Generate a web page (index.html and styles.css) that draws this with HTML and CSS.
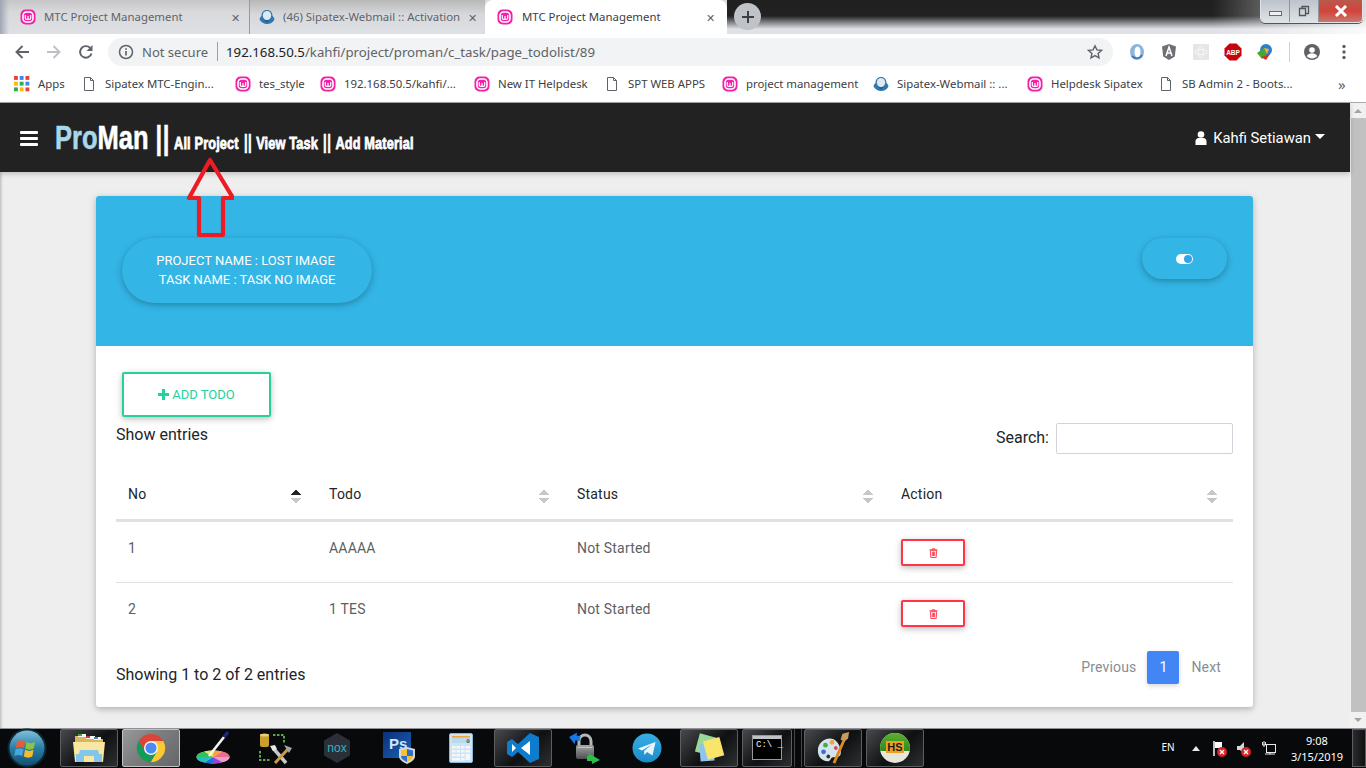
FILE: index.html
```html
<!DOCTYPE html>
<html lang="en">
<head>
<meta charset="utf-8">
<title>MTC Project Management</title>
<link rel="stylesheet" href="styles.css">
</head>
<body>
<svg class="defs" width="0" height="0" aria-hidden="true">
  <defs>
    <symbol id="wamp" viewBox="0 0 16 16">
      <rect x="0.5" y="0.5" width="15" height="15" rx="5" fill="#f61fa8"/>
      <rect x="3" y="3" width="10" height="10" rx="3.5" fill="none" stroke="#fff" stroke-width="1.6"/>
      <path d="M5.3 6v3.2q0 1.2 1.3 1.2T8 9.2V7v2.2q0 1.2 1.3 1.2t1.4-1.2V6" fill="none" stroke="#fff" stroke-width="1.2"/>
    </symbol>
    <symbol id="doc" viewBox="0 0 16 16">
      <path d="M3.5 1.5h6l3 3v10h-9z M9.5 1.5v3h3" fill="#fff" stroke="#5f6368" stroke-width="1"/>
    </symbol>
    <symbol id="mail" viewBox="0 0 16 16">
      <path d="M8 1C4.5 1 2.5 3.5 2.5 7c-1 .8-1.8 2-2 3.5C2 13 5 15 8 15c3 0 6-1.500 7.500-4.500-.2-1.500-1-2.700-2-3.500C13.500 3.500 11.500 1 8 1z" fill="#2f78b0"/>
      <ellipse cx="8" cy="6.500" rx="4.200" ry="4.500" fill="#dfe8ee"/>
      <path d="M3.500 9.500C5 12 11 12 12.500 9.500L8 13.500z" fill="#1d5a8c"/>
    </symbol>
    <linearGradient id="g-orb" x1="0" y1="0" x2="0" y2="1">
      <stop offset="0" stop-color="#7fc0d8"/><stop offset=".5" stop-color="#2a7ea6"/><stop offset="1" stop-color="#124f74"/>
    </linearGradient>
    <linearGradient id="g-ps" x1="0" y1="0" x2="1" y2="1">
      <stop offset="0" stop-color="#0c2f78"/><stop offset="1" stop-color="#1a62b8"/>
    </linearGradient>
    <linearGradient id="g-lock" x1="0" y1="0" x2="0" y2="1">
      <stop offset="0" stop-color="#a4a6a8"/><stop offset="1" stop-color="#4c4e50"/>
    </linearGradient>
    <linearGradient id="g-tg" x1="0" y1="0" x2="0" y2="1">
      <stop offset="0" stop-color="#38aee4"/><stop offset="1" stop-color="#1a8ccb"/>
    </linearGradient>
  </defs>
</svg>

<div class="tabstrip">
  <div class="tab tab-first">
    <svg class="fav"><use href="#wamp"/></svg>
    <span class="tab-title">MTC Project Management</span>
    <span class="tab-x">✕</span>
  </div>
  <div class="tab tab-second">
    <svg class="fav"><use href="#mail"/></svg>
    <span class="tab-title">(46) Sipatex-Webmail :: Activation</span>
    <span class="tab-x">✕</span>
  </div>
  <div class="tab tab-active">
    <svg class="fav"><use href="#wamp"/></svg>
    <span class="tab-title">MTC Project Management</span>
    <span class="tab-x">✕</span>
  </div>
  <div class="strip-rest">
    <span class="new-tab">
      <svg viewBox="0 0 14 14" width="14" height="14"><path d="M7 1v12M1 7h12" stroke="#3c4043" stroke-width="2"/></svg>
    </span>
    <div class="winctl">
      <span class="wc wc-min"><i></i></span>
      <span class="wc wc-max"><svg viewBox="0 0 12 12" width="12" height="12"><path d="M1.500 3.500h6v7h-6z M4 3.500V1.500h6.500v7H7.500" fill="none" stroke="#50565c" stroke-width="1.300"/></svg></span>
      <span class="wc wc-close"><svg viewBox="0 0 14 12" width="14" height="12"><path d="M2 1l10 10M12 1L2 11" stroke="#fff" stroke-width="3"/></svg></span>
    </div>
  </div>
</div>

<div class="toolbar">
  <div class="nav-btns">
    <svg viewBox="0 0 16 16" width="16" height="16"><path d="M15 8H2.500M8.500 2l-6 6 6 6" fill="none" stroke="#5f6368" stroke-width="1.900"/></svg>
    <svg viewBox="0 0 16 16" width="16" height="16"><path d="M1 8h12.500M7.500 2l6 6-6 6" fill="none" stroke="#bdc1c6" stroke-width="1.900"/></svg>
    <svg viewBox="0 0 16 16" width="16" height="16"><path d="M13.500 9.500A5.800 5.800 0 1 1 12 3.800" fill="none" stroke="#5f6368" stroke-width="1.900"/><path d="M14.500 1v6h-6z" fill="#5f6368"/></svg>
  </div>
  <div class="omnibox">
    <svg class="info" viewBox="0 0 16 16" width="16" height="16"><circle cx="8" cy="8" r="6.500" fill="none" stroke="#5f6368" stroke-width="1.500"/><path d="M8 7v4.500M8 4.200v1.600" stroke="#5f6368" stroke-width="1.700"/></svg>
    <span class="not-secure">Not secure</span>
    <span class="omni-sep"></span>
    <span class="url"><b>192.168.50.5</b>/kahfi/project/proman/c_task/page_todolist/89</span>
    <svg class="star" viewBox="0 0 16 16" width="16" height="16"><path d="M8 1.800l1.900 4.100 4.500.5-3.300 3 .9 4.400L8 11.600l-4 2.200.9-4.400-3.300-3 4.500-.5z" fill="none" stroke="#5f6368" stroke-width="1.400"/></svg>
  </div>
  <div class="ext">
    <svg viewBox="0 0 16 18" width="16" height="18"><ellipse cx="8" cy="9" rx="7" ry="8" fill="#8fb4dc"/><ellipse cx="8.500" cy="9" rx="3" ry="5.500" fill="#fff"/><path d="M3 13C5 16 11 16 13 12" stroke="#2e6fb5" stroke-width="1.500" fill="none"/></svg>
    <svg viewBox="0 0 16 18" width="16" height="18"><path d="M8 1l7 2.500-1.200 10L8 17l-5.800-3.500L1 3.500z" fill="#6d7074"/><path d="M5 13l3-9 3 9M6 10h4" stroke="#fff" stroke-width="1.500" fill="none"/></svg>
    <svg viewBox="0 0 16 16" width="16" height="16"><rect width="16" height="16" fill="#e6e6e6"/><ellipse cx="8" cy="8" rx="6" ry="2.500" fill="none" stroke="#f6f6f6"/><ellipse cx="8" cy="8" rx="2.500" ry="6" fill="none" stroke="#f6f6f6"/></svg>
    <svg class="wide" viewBox="0 0 18 18" width="18" height="18"><path d="M5.500 0.500h7l5 5v7l-5 5h-7l-5-5v-7z" fill="#c8050f"/><text x="9" y="12" class="abp">ABP</text></svg>
    <svg class="wide" viewBox="0 0 18 18" width="18" height="18"><circle cx="10" cy="7" r="6" fill="#2c7fd0"/><path d="M1 10l7-5 3 5-5 6z" fill="#47a82f"/><path d="M8 5l5 1-2 5z" fill="#f7b32b"/><path d="M5 14l9-3-4 6z" fill="#d2322d"/></svg>
    <span class="ext-sep"></span>
    <svg viewBox="0 0 18 18" width="18" height="18"><circle cx="9" cy="9" r="8" fill="#5f6368"/><circle cx="9" cy="7" r="2.800" fill="#fff"/><path d="M3.800 13c1.200-2 3-2.800 5.200-2.800s4 .8 5.200 2.800c-1.200 1.600-3 2.500-5.200 2.500S5 14.600 3.800 13z" fill="#fff"/></svg>
    <svg class="dots" viewBox="0 0 4 16" width="4" height="16"><circle cx="2" cy="2.500" r="1.700" fill="#5f6368"/><circle cx="2" cy="8" r="1.700" fill="#5f6368"/><circle cx="2" cy="13.500" r="1.700" fill="#5f6368"/></svg>
  </div>
</div>

<div class="bookmarks">
  <div class="bm">
    <svg class="fav" viewBox="0 0 14 14"><g><rect x="0" y="0" width="3.400" height="3.400" fill="#ea4335"/><rect x="5" y="0" width="3.400" height="3.400" fill="#4285f4"/><rect x="10" y="0" width="3.400" height="3.400" fill="#ea4335"/><rect x="0" y="5" width="3.400" height="3.400" fill="#fbbc05"/><rect x="5" y="5" width="3.400" height="3.400" fill="#34a853"/><rect x="10" y="5" width="3.400" height="3.400" fill="#4285f4"/><rect x="0" y="10" width="3.400" height="3.400" fill="#34a853"/><rect x="5" y="10" width="3.400" height="3.400" fill="#fbbc05"/><rect x="10" y="10" width="3.400" height="3.400" fill="#ea4335"/></g></svg>
    <span>Apps</span>
  </div>
  <div class="bm bm-shift"><svg class="fav"><use href="#doc"/></svg><span>Sipatex MTC-Engin...</span></div>
  <div class="bm"><svg class="fav"><use href="#wamp"/></svg><span>tes_style</span></div>
  <div class="bm"><svg class="fav"><use href="#wamp"/></svg><span>192.168.50.5/kahfi/...</span></div>
  <div class="bm"><svg class="fav"><use href="#wamp"/></svg><span>New IT Helpdesk</span></div>
  <div class="bm"><svg class="fav"><use href="#doc"/></svg><span>SPT WEB APPS</span></div>
  <div class="bm"><svg class="fav"><use href="#wamp"/></svg><span>project management</span></div>
  <div class="bm"><svg class="fav"><use href="#mail"/></svg><span>Sipatex-Webmail :: ...</span></div>
  <div class="bm"><svg class="fav"><use href="#wamp"/></svg><span>Helpdesk Sipatex</span></div>
  <div class="bm"><svg class="fav"><use href="#doc"/></svg><span>SB Admin 2 - Boots...</span></div>
  <div class="bm-more">»</div>
</div>

<div class="viewport">
  <div class="page">
    <nav class="navbar">
      <span class="burger"><i></i><i></i><i></i></span>
      <div class="brand">
        <span class="pro">Pro</span><span class="man">Man</span>
        <span class="bars bars-big">||</span>
        <a class="nav-link">All Project</a>
        <span class="bars">||</span>
        <a class="nav-link">View Task</a>
        <span class="bars">||</span>
        <a class="nav-link">Add Material</a>
      </div>
      <div class="user">
        <svg viewBox="0 0 12 14" width="12" height="14"><circle cx="6" cy="3.500" r="3.300" fill="#fff"/><path d="M0.500 14v-3.500C.5 8.500 2 7 3.500 7h5c1.500 0 3 1.500 3 3.500V14z" fill="#fff"/></svg>
        <span>Kahfi Setiawan</span>
        <i class="caret"></i>
      </div>
    </nav>

    <main class="content">
      <section class="card">
        <header class="card-head">
          <div class="pill pill-title">
            <div>PROJECT NAME : LOST IMAGE</div>
            <div>&nbsp;TASK NAME : TASK NO IMAGE</div>
          </div>
          <div class="pill pill-toggle">
            <span class="toggle"><i></i></span>
          </div>
        </header>
        <div class="card-body">
          <button class="btn-add" type="button"><span class="plus"></span>ADD TODO</button>
          <div class="dt-top">
            <div class="dt-length">Show entries</div>
            <label class="dt-search">Search:<input type="text"></label>
          </div>
          <table class="dt">
            <thead>
              <tr>
                <th class="c-no">No<span class="sort sort-asc"></span></th>
                <th class="c-todo">Todo<span class="sort"></span></th>
                <th class="c-status">Status<span class="sort"></span></th>
                <th class="c-action">Action<span class="sort"></span></th>
              </tr>
            </thead>
            <tbody>
              <tr>
                <td>1</td><td>AAAAA</td><td>Not Started</td>
                <td><button class="btn-del" type="button"><svg viewBox="0 0 10 11" width="9" height="10"><path d="M0.500 2h9M3.500 2V.8h3V2M1.500 2.500l.5 8h6l.5-8zM3.700 4v5M5 4v5M6.300 4v5" fill="none" stroke="#ff3547" stroke-width="1"/></svg></button></td>
              </tr>
              <tr>
                <td>2</td><td>1 TES</td><td>Not Started</td>
                <td><button class="btn-del" type="button"><svg viewBox="0 0 10 11" width="9" height="10"><path d="M0.500 2h9M3.500 2V.8h3V2M1.500 2.500l.5 8h6l.5-8zM3.700 4v5M5 4v5M6.300 4v5" fill="none" stroke="#ff3547" stroke-width="1"/></svg></button></td>
              </tr>
            </tbody>
          </table>
          <div class="dt-bottom">
            <div class="dt-info">Showing 1 to 2 of 2 entries</div>
            <div class="pager">
              <span class="pg">Previous</span>
              <span class="pg pg-on">1</span>
              <span class="pg">Next</span>
            </div>
          </div>
        </div>
      </section>
    </main>

    <svg class="red-arrow" viewBox="0 0 48 82" width="48" height="82"><path d="M24 3L3 41h10v37h24V41h10z" fill="none" stroke="#ed1c24" stroke-width="4.200" stroke-linejoin="round"/></svg>
  </div>
  <div class="scrollbar">
    <span class="sb-up"></span>
    <span class="sb-thumb"></span>
    <span class="sb-down"></span>
  </div>
</div>

<footer class="taskbar">
  <div class="start">
    <svg viewBox="0 0 40 40" width="40" height="40">
      <circle cx="20" cy="20" r="19.500" fill="#0c2735"/>
      <circle cx="20" cy="20" r="17.500" fill="url(#g-orb)"/>
      <path d="M10 13.500c2.500-1.500 5-1.500 8 0l-1.200 6.500c-2.800-1.200-5.300-1.200-8 0z" fill="#ea5a35"/>
      <path d="M19.500 14c3 1.500 5.500 1.500 8.500 0l-1.200 6.500c-3 1.500-5.500 1.500-8.500 0z" fill="#8ac441"/>
      <path d="M8.500 21.300c2.600-1.200 5.200-1.200 8 0L15.300 28c-2.700-1.300-5.200-1.300-8 0z" fill="#4aa6dc"/>
      <path d="M18 21.800c3 1.500 5.500 1.500 8.500 0L25.300 28.500c-3 1.500-5.500 1.500-8.500 0z" fill="#f7bc2e"/>
    </svg>
  </div>
  <div class="tb-app tb-open">
    <svg viewBox="0 0 32 30" width="32" height="30"><path d="M2 3h11l2 3h15v22H2z" fill="#d9b75c"/><rect x="5" y="1" width="8" height="3" fill="#f5f5f0"/><rect x="5" y="1" width="4" height="2" fill="#3ea63a"/><rect x="13" y="3" width="9" height="3" fill="#f5f5f0"/><rect x="13" y="3" width="4" height="2" fill="#d33a2c"/><rect x="21" y="4" width="7" height="3" fill="#f5f5f0"/><rect x="21" y="4" width="4" height="2" fill="#3a86d3"/><path d="M0 9h32l-2 20H2z" fill="#f8e6a2"/><path d="M7 17h18l1 4h3v8H3v-8h3z" fill="#82c6ea"/><rect x="11" y="23" width="10" height="6" fill="#f8e6a2"/></svg>
  </div>
  <div class="tb-app tb-open tb-active">
    <svg viewBox="0 0 32 32" width="30" height="30"><path d="M3 8.500L9.500 19.750 16 16V8.500H29A15 15 0 0 0 3 8.500z" fill="#db4437"/><path d="M3 8.500L9.500 19.750 16 31A15 15 0 0 1 3 8.500z" fill="#0f9d58"/><path d="M29 8.500H16V16L22.500 19.750 16 31A15 15 0 0 0 29 8.500z" fill="#fcc934"/><path d="M9.500 19.750L16 31 22.500 19.750 16 16z" fill="#0f9d58"/><path d="M22.500 19.750L16 31A15 15 0 0 0 24 28.500z" fill="#fcc934"/><circle cx="16" cy="16" r="7.500" fill="#f4f4f4"/><circle cx="16" cy="16" r="5.900" fill="#4a8af4"/></svg>
  </div>
  <div class="tb-app">
    <svg viewBox="0 0 36 36" width="36" height="36"><ellipse cx="18" cy="27" rx="16.500" ry="6.500" fill="#e8e8e8"/><path d="M18 27H1.500a16.500 6.500 0 0 1 8-5.600z" fill="#30c060"/><path d="M18 27L9.500 21.400a16.500 6.500 0 0 1 9-.9z" fill="#f6e23a"/><path d="M18 27l.5-6.500a16.500 6.500 0 0 1 9 1z" fill="#f4a63a"/><path d="M18 27l9.500-5.500a16.500 6.500 0 0 1 7 5.500z" fill="#f06a8a"/><path d="M18 27h16.500a16.500 6.500 0 0 1-7 5.300z" fill="#e8a0c8"/><path d="M18 27l9.500 5.300a16.500 6.500 0 0 1-9.500 1.200z" fill="#a040d0"/><path d="M18 27v6.500a16.500 6.500 0 0 1-9-1z" fill="#2070e0"/><path d="M18 27L9 32.500A16.500 6.500 0 0 1 1.500 27z" fill="#20c0c0"/><path d="M14 26L29 7" stroke="#f4f4f4" stroke-width="2.600"/><path d="M29 7l4-5" stroke="#1d2a8a" stroke-width="3.200"/></svg>
  </div>
  <div class="tb-app">
    <svg viewBox="0 0 36 36" width="36" height="36"><rect x="3" y="4" width="9" height="13" rx="2" fill="#c9a02c"/><ellipse cx="7.500" cy="5" rx="4.500" ry="1.500" fill="#e8cf78"/><path d="M16 5h11v9M3 21v9h10" fill="none" stroke="#5aa84a" stroke-width="2" stroke-dasharray="2.500 1.500"/><path d="M16 18l13 15" stroke="#c8c8c8" stroke-width="3.500"/><path d="M31 19L18 33" stroke="#c89a4a" stroke-width="3"/><path d="M13 16l5-1 2 4-4 2z" fill="#e8e8e8"/><path d="M27 15l8 3-3 5z" fill="#a4a4a4"/></svg>
  </div>
  <div class="tb-app">
    <svg viewBox="0 0 26 30" width="26" height="30"><path d="M13 0l13 7.500v15L13 30 0 22.500v-15z" fill="#2a2f38"/><text x="13" y="19" class="nox">nox</text></svg>
  </div>
  <div class="tb-app">
    <svg viewBox="0 0 32 32" width="32" height="32"><rect x="0" y="0" width="28" height="26" fill="url(#g-ps)"/><text x="6" y="17" class="ps">Ps</text><path d="M24 15l8 2v7c0 4-4 6-8 8-4-2-8-4-8-8v-7z" fill="#d8d8d8"/><path d="M24 17l6 1.500V24h-6zM18 24h6v6c-3-1.500-6-3-6-6z" fill="#2f6fd0"/><path d="M18 18.500l6-1.500v7h-6zM24 24h6c0 3-3 4.500-6 6z" fill="#f2c230"/></svg>
  </div>
  <div class="tb-app">
    <svg viewBox="0 0 24 30" width="24" height="30"><rect x="0.500" y="0.500" width="23" height="29" rx="1.500" fill="#cfe3f2" stroke="#8fb8d6"/><rect x="3" y="3" width="18" height="7" fill="#b9d9ee"/><rect x="3" y="3" width="18" height="1.500" fill="#f2a33a"/><text x="19" y="9.500" class="calc">0</text><g fill="#f4f8fb"><rect x="3" y="13" width="3.500" height="2.500"/><rect x="7.500" y="13" width="3.500" height="2.500"/><rect x="12" y="13" width="3.500" height="2.500"/><rect x="16.500" y="13" width="4.500" height="2.500"/><rect x="3" y="17" width="3.500" height="2.500"/><rect x="7.500" y="17" width="3.500" height="2.500"/><rect x="12" y="17" width="3.500" height="2.500"/><rect x="16.500" y="17" width="4.500" height="2.500"/><rect x="3" y="21" width="3.500" height="2.500"/><rect x="7.500" y="21" width="3.500" height="2.500"/><rect x="12" y="21" width="3.500" height="2.500"/><rect x="16.500" y="21" width="4.500" height="6"/><rect x="3" y="25" width="8" height="2.500"/><rect x="12" y="25" width="3.500" height="2.500"/></g></svg>
  </div>
  <div class="tb-app tb-open">
    <svg viewBox="0 0 32 30" width="32" height="30"><path d="M23 0l9 4v22l-9 4-12-11-6 5-5-3V9l5-3 6 5z" fill="#0e7ccc"/><path d="M23 8v14l-9-7z" fill="#fff"/><path d="M5 11l4 4-4 4z" fill="#fff"/></svg>
  </div>
  <div class="tb-app">
    <svg viewBox="0 0 32 32" width="32" height="32"><path d="M10 14V9a6 6 0 0 1 12 0v5" fill="none" stroke="#b4b6b8" stroke-width="3"/><rect x="7" y="13" width="18" height="14" rx="2" fill="url(#g-lock)"/><rect x="9" y="15" width="14" height="1" fill="#c4c6c8"/><path d="M0 6l7-6v3h4v5H7v4z" fill="#1678e6" transform="rotate(12 5 6)"/><path d="M31 28l-8 4v-3h-5v-5h2l-1-3 12 7z" fill="#2cc04a"/></svg>
  </div>
  <div class="tb-app">
    <svg viewBox="0 0 30 30" width="30" height="30"><circle cx="15" cy="15" r="14.500" fill="url(#g-tg)"/><path d="M6 15.500L23.500 9 20.500 22.500 15 19 12.500 22 12 18 20 11.500 10 17.500z" fill="#eaf5fb"/></svg>
  </div>
  <div class="tb-app tb-open">
    <svg viewBox="0 0 32 30" width="32" height="30"><rect x="4" y="2" width="17" height="19" fill="#9ad89a" transform="rotate(15 12 12)"/><rect x="7" y="11" width="14" height="17" fill="#8fc4ee" transform="rotate(-4 14 20)"/><rect x="12" y="6" width="17" height="19" fill="#f9e56a" transform="rotate(-15 20 15)"/></svg>
  </div>
  <div class="tb-app tb-open tb-cmd">
    <div class="cmd"><span class="cmd-bar"></span><span class="cmd-text">C:\ _</span></div>
  </div>
  <div class="tb-grip"></div>
  <div class="tb-app tb-open">
    <svg viewBox="0 0 36 36" width="34" height="34"><path d="M15 8C7 8 2 14 2 21c0 7 5 11 10 11 4 0 3-3 5-4 3-1 7 1 9-3 2-5-3-17-11-17z" fill="#d3e4ee"/><circle cx="10" cy="15" r="2.500" fill="#4aa84a"/><circle cx="17" cy="12" r="2.500" fill="#e8a83a"/><circle cx="8" cy="22" r="2.500" fill="#3a6fd0"/><circle cx="13" cy="27" r="2" fill="#333"/><circle cx="21" cy="18" r="2" fill="#d84a4a"/><path d="M30 9L19 34" stroke="#e08a1e" stroke-width="3"/><path d="M28 3l7-2-1 7-4 3-4-2z" fill="#c89a5e"/></svg>
  </div>
  <div class="tb-app tb-open">
    <div class="hs"><span class="hs-top"></span><span class="hs-label">HS</span></div>
  </div>
  <div class="tray">
    <span class="tray-lang">EN</span>
    <i class="tray-up"></i>
    <svg viewBox="0 0 16 18" width="16" height="18"><path d="M2 1v15" stroke="#fff" stroke-width="1.500"/><path d="M3 2h7v6H3z" fill="#fff"/><circle cx="10" cy="12" r="5" fill="#d8232a"/><path d="M8 10l4 4M12 10l-4 4" stroke="#fff" stroke-width="1.400"/></svg>
    <svg viewBox="0 0 16 18" width="16" height="18"><path d="M1 6h3l4-4v12L4 10H1z" fill="#d8d8d8"/><circle cx="10" cy="12" r="5" fill="#d8232a"/><path d="M8 10l4 4M12 10l-4 4" stroke="#fff" stroke-width="1.400"/></svg>
    <svg viewBox="0 0 16 18" width="16" height="18"><rect x="5.500" y="4.500" width="9" height="8" fill="none" stroke="#e8e8e8"/><path d="M3 1v6M1.500 2v3h3V2M4 14h10M9 12.500v2" stroke="#e8e8e8"/></svg>
    <div class="clock"><span>9:08</span><span>3/15/2019</span></div>
    <div class="show-desktop"></div>
  </div>
</footer>
</body>
</html>
```

FILE: styles.css
```css
* { box-sizing: border-box; }
html, body { margin: 0; padding: 0; width: 1366px; height: 768px; overflow: hidden; }
body { display: flex; flex-direction: column; background: #fff; font-family: Roboto, sans-serif; }
.defs { position: absolute; }
svg { display: block; flex: none; }

/* tab strip */
.tabstrip { height: 34px; flex: none; display: flex; font: 11.400px "Noto Sans", "Open Sans", sans-serif; color: #5f6368; background: #d9dbdf; }
.tab { height: 34px; display: flex; align-items: center; position: relative; flex: none; }
.tab-first { width: 249px; padding-left: 20px; background: linear-gradient(90deg, #9fa7b3 0, rgba(159,167,179,0) 9px), linear-gradient(#c6c6c8 0, #d9d9db 12px, #dde0e4 100%); }
.tab-second { width: 236px; padding-left: 9px; background: linear-gradient(#b8b8b8 0, #d6d7da 14px, #dee1e6 100%); border-left: 1px solid #9a9a9a; border-radius: 0 0 8px 0; }
.tab-active { width: 242px; padding-left: 12px; background: #fff; border-radius: 8px 8px 0 0; }
.fav { width: 16px; height: 16px; flex: none; }
.tab-title { margin-left: 8px; white-space: nowrap; overflow: hidden; padding-bottom: 2px; }
.tab-first .tab-title { width: 181px; }
.tab-second .tab-title { width: 179px; }
.tab-active .tab-title { width: 178px; margin-left: 9px; color: #3c4043; }
.tab-x { font-size: 11px; width: 14px; text-align: center; color: #5f6368; margin-left: 3px; }
.strip-rest { flex: 1; position: relative; display: flex; align-items: flex-start; padding-left: 7px;
  background: linear-gradient(90deg, rgba(255,255,255,0) 0, rgba(255,255,255,0) 76%, rgba(255,255,255,.85) 100%),
              linear-gradient(#202020 0, #222 16px, #8a8c90 23px, #dee1e6 29px); }
.new-tab { width: 27px; height: 27px; margin-top: 3px; border-radius: 50%; background: #bfc2c6; display: flex; align-items: center; justify-content: center; }
.winctl { position: absolute; right: 3px; top: 0; width: 103px; height: 23px; display: flex; border: 1px solid #dfe2e6; border-top: 0; border-radius: 0 0 5px 5px; overflow: hidden; box-shadow: 0 1px 0 #555; }
.wc { height: 100%; display: flex; align-items: center; justify-content: center; }
.wc-min, .wc-max { width: 29px; background: linear-gradient(#bcc3ca, #dfe3e8); border-right: 1px solid #8f959b; }
.wc-min i { display: block; width: 13px; height: 5px; background: #eef1f3; border: 1px solid #676c72; margin-top: 4px; }
.wc-close { flex: 1; background: linear-gradient(#b9594f, #d4433a 50%, #c9786e); }

/* toolbar */
.toolbar { height: 35px; flex: none; background: #fff; display: flex; align-items: center; padding-left: 14px; font-family: "Noto Sans", "Open Sans", sans-serif; }
.nav-btns { width: 94px; display: flex; gap: 16px; }
.omnibox { width: 1005px; height: 28px; border-radius: 14px; background: #f1f3f4; display: flex; align-items: center; padding-left: 10px; font-size: 13px; color: #5f6368; }
.not-secure { margin-left: 8px; width: 67px; white-space: nowrap; }
.omni-sep { width: 1px; height: 19px; background: #9aa0a6; margin: 0 8px 0 8px; }
.url { flex: 1; white-space: nowrap; font-size: 13.250px; }
.url b { color: #202124; font-weight: 400; }
.star { margin-right: 10px; }
.ext { flex: 1; display: flex; align-items: center; padding-left: 16px; gap: 16px; }
.ext .wide { margin: 0 -1px; }
.ext-sep { width: 1px; height: 20px; background: #cfd1d4; margin-right: -3px; }
.ext .dots { margin-left: 5px; }
.abp { font: bold 6.500px "Liberation Sans", sans-serif; fill: #fff; text-anchor: middle; }

/* bookmarks */
.bookmarks { height: 33px; flex: none; background: #fff; display: grid; align-items: center; padding: 0 0 4px 14px;
  grid-template-columns: 66px 155px 85px 154px 130px 118px 151px 154px 131px 160px 1fr;
  font: 11.400px "Noto Sans", "Open Sans", sans-serif; color: #3c4043; }
.bm { display: flex; align-items: center; gap: 8px; white-space: nowrap; }
.bm-shift { padding-left: 1px; }
.bm-more { font-size: 15px; color: #5f6368; padding-left: 20px; }

/* page */
.viewport { flex: 1; min-height: 0; display: flex; border-top: 1px solid #a9a9a9; }
.page { flex: 1; min-width: 0; background: #eee; position: relative; box-shadow: inset 3px 0 3px -2px rgba(0,0,0,.25); }
.navbar { height: 69px; background: #222; display: flex; align-items: center; padding: 0 25px 0 20px; color: #fff; box-shadow: 0 2px 5px rgba(0,0,0,.2); position: relative; }
.burger { width: 18px; display: flex; flex-direction: column; gap: 3px; margin-top: 1px; }
.burger i { display: block; height: 3px; background: #fff; border-radius: 1px; }
.brand { display: flex; align-items: baseline; margin-left: 17px; transform: scaleX(.75); transform-origin: left center; font-family: "Liberation Sans", sans-serif; font-weight: 700; white-space: nowrap; -webkit-text-stroke: .6px currentColor; }
.pro { font-size: 34px; color: #a7d8ec; }
.man { font-size: 34px; color: #fff; }
.bars { font-size: 20px; margin: 0 5.500px 0 6.500px; color: #fff; -webkit-text-stroke: .3px currentColor; }
.bars-big { font-size: 34px; margin: 0 6px 0 9px; }
.nav-link { font-size: 17px; color: #fff; letter-spacing: .2px; -webkit-text-stroke: .8px currentColor; }
.user { margin-left: auto; display: flex; align-items: center; font-size: 14.800px; }
.user span { margin-left: 6px; }
.caret { width: 0; height: 0; border: 5px solid transparent; border-top-color: #fff; border-bottom: 0; margin-left: 4px; margin-top: -2px; }

.content { padding: 24px 97px 0 96px; }
.card { background: #fff; border-radius: 3px; box-shadow: 0 2px 5px rgba(0,0,0,.16), 0 2px 10px rgba(0,0,0,.12); height: 511px; display: flex; flex-direction: column; }
.card-head { height: 150px; background: #33b5e5; border-radius: 3px 3px 0 0; display: flex; justify-content: space-between; align-items: flex-start; padding: 42px 26px 0; flex: none; }
.pill { background: #33b5e5; border-radius: 33px; box-shadow: 0 2px 5px rgba(0,0,0,.16), 0 2px 10px rgba(0,0,0,.12); color: #fff; }
.pill-title { width: 250px; height: 65px; font-size: 13px; line-height: 19px; text-align: center; padding: 13px 3px 0 0; }
.pill-toggle { width: 85px; height: 41px; display: flex; align-items: center; justify-content: center; }
.toggle { width: 17px; height: 10px; border-radius: 5px; background: #fff; display: flex; justify-content: flex-end; align-items: center; padding-right: 1px; }
.toggle i { width: 8px; height: 8px; border-radius: 50%; background: #33a4e5; }
.card-body { flex: 1; padding: 26px 20px 0; display: flex; flex-direction: column; }
.btn-add { align-self: flex-start; margin-left: 6px; width: 149px; height: 45px; background: #fff; border: 2px solid #26d19b; border-radius: 2px; color: #26d19b; font: 13px Roboto, sans-serif; box-shadow: 0 2px 5px rgba(0,0,0,.16), 0 2px 10px rgba(0,0,0,.12); display: flex; align-items: center; justify-content: center; gap: 3px; padding: 0; }
.plus { width: 11px; height: 11px; background: linear-gradient(#26d19b, #26d19b) center/100% 3px no-repeat, linear-gradient(#26d19b, #26d19b) center/3px 100% no-repeat; }
.dt-top { display: flex; justify-content: space-between; height: 39px; margin-top: 6px; font-size: 16px; color: #212529; flex: none; }
.dt-length { line-height: 24px; }
.dt-search { display: flex; align-items: flex-start; gap: 7px; line-height: 29px; }
.dt-search input { width: 177px; height: 31px; border: 1px solid #ced4da; border-radius: 2px; background: #fff; }
.dt { width: 100%; border-collapse: separate; border-spacing: 0; table-layout: fixed; font-size: 14px; }
.dt th { height: 60px; padding: 6px 12px 0; font-weight: 400; text-align: left; color: #212529; border-bottom: 3px solid #dee2e6; position: relative; letter-spacing: .2px; }
.c-no { width: 201px; }
.c-todo { width: 248px; }
.c-status { width: 324px; }
.dt td { height: 61px; padding: 18px 12px 0; line-height: 16px; vertical-align: top; color: #5c5f63; border-bottom: 1px solid #dfe1e6; letter-spacing: .2px; }
.dt tr:last-child td { border-bottom: 0; }
.sort { position: absolute; right: 16px; top: 28px; width: 10px; height: 13px;
  background: linear-gradient(to bottom right, transparent 49%, #c4c7cb 50%) left top/5px 5px no-repeat,
              linear-gradient(to bottom left, transparent 49%, #c4c7cb 50%) right top/5px 5px no-repeat,
              linear-gradient(to top right, transparent 49%, #c4c7cb 50%) left bottom/5px 5px no-repeat,
              linear-gradient(to top left, transparent 49%, #c4c7cb 50%) right bottom/5px 5px no-repeat; }
.sort-asc { background:
              linear-gradient(to bottom right, transparent 49%, #212529 50%) left top/5px 5px no-repeat,
              linear-gradient(to bottom left, transparent 49%, #212529 50%) right top/5px 5px no-repeat,
              linear-gradient(to top right, transparent 49%, #c4c7cb 50%) left bottom/5px 5px no-repeat,
              linear-gradient(to top left, transparent 49%, #c4c7cb 50%) right bottom/5px 5px no-repeat; }
.btn-del { width: 64px; height: 27px; background: #fff; border: 2px solid #ff3547; border-radius: 2px; box-shadow: 0 2px 5px rgba(0,0,0,.16), 0 2px 10px rgba(0,0,0,.12); display: flex; align-items: center; justify-content: center; padding: 0; margin-top: -1px; }
.dt-bottom { display: flex; justify-content: space-between; align-items: flex-start; margin-top: 7px; }
.dt-info { font-size: 16px; line-height: 19px; color: #212529; padding-top: 14px; }
.pager { display: flex; align-items: center; font-size: 14px; color: #868e96; letter-spacing: .15px; padding-right: 1px; }
.pg { padding: 0 11px 0 12px; height: 33px; line-height: 33px; }
.pg-on { width: 32px; padding: 0; text-align: center; background: #4285f4; color: #fff; border-radius: 2px; box-shadow: 0 2px 5px rgba(0,0,0,.16); }
.red-arrow { position: absolute; left: 186px; top: 54px; }

/* scrollbar */
.scrollbar { width: 16px; flex: none; background: #f1f1f1; display: flex; flex-direction: column; align-items: center; }
.sb-up { width: 0; height: 0; margin: 6px 0 5px; border: 4px solid transparent; border-bottom: 4px solid #a3a3a3; border-top: 0; }
.sb-thumb { flex: 1; width: 15px; margin-left: 1px; background: #c1c1c1; }
.sb-down { width: 0; height: 0; margin: 6px 0 6px; border: 4px solid transparent; border-top: 4px solid #a3a3a3; border-bottom: 0; }

/* taskbar */
.taskbar { height: 40px; flex: none; display: flex; align-items: flex-start; color: #fff; background: #08090a; border-top: 1px solid #8f9194; font-family: "Noto Sans", "Open Sans", sans-serif; }
.start { width: 58px; display: flex; padding-left: 7px; margin-top: -1px; }
.tb-app { width: 58px; height: 38px; margin: 0 2px; flex: none; display: flex; align-items: center; justify-content: center; border-radius: 2px; border: 1px solid transparent; }
.tb-open { border-color: #5c5e62; background: linear-gradient(135deg, #47494c 0, #232426 35%, #0f1012 55%, #2e2f31 100%); }
.tb-active { background: linear-gradient(135deg, #98999b 0, #7c7d7f 45%, #656668 100%); border-color: #c2c2c2; }
.tb-cmd { width: 50px; margin-right: 0; }
.cmd { width: 30px; height: 25px; background: #000; border: 1px solid #9a9a9a; margin-top: -2px; }
.cmd-bar { display: block; height: 3px; background: #bfc3c7; }
.cmd-text { font: 9px "Liberation Mono", monospace; color: #f2f2f2; display: block; line-height: 13px; padding-left: 3px; white-space: pre; }
.tb-grip { width: 8px; height: 38px; margin-left: 2px; border-left: 1px solid #44464a; border-right: 1px solid #44464a; }
.hs { width: 30px; height: 30px; border-radius: 50%; background: #e8e6da; position: relative; overflow: hidden; }
.hs-top { display: block; height: 18px; background: linear-gradient(#5cb02f, #2f8a1e); }
.hs-label { position: absolute; left: 6px; right: 6px; top: 8px; height: 12px; background: #f0a020; color: #1e1e1e; font: bold 11px/12px "Liberation Sans", sans-serif; text-align: center; }
.tray { margin-left: auto; height: 100%; display: flex; align-items: center; }
.tray-lang { font-size: 10px; width: 30px; margin-top: -4px; }
.tray-up { width: 0; height: 0; border: 4px solid transparent; border-bottom: 5px solid #e8e8e8; border-top: 0; margin-right: 12px; }
.tray svg { margin-right: 8.500px; }
.clock { width: 61px; margin-left: 6px; display: flex; flex-direction: column; align-items: center; font-size: 11px; line-height: 16px; padding-right: 9px; }
.show-desktop { width: 14px; height: 38px; align-self: flex-start; border: 1px solid #5c5e62; background: linear-gradient(90deg, #2a2b2e, #111); }
.nox { font: 400 12px "Liberation Sans", sans-serif; fill: #2fb5c0; text-anchor: middle; }
.ps { font: 700 15px "Liberation Sans", sans-serif; fill: #cfe5ff; }
.calc { font: 700 6px "Liberation Mono", monospace; fill: #33566e; text-anchor: middle; }
```
